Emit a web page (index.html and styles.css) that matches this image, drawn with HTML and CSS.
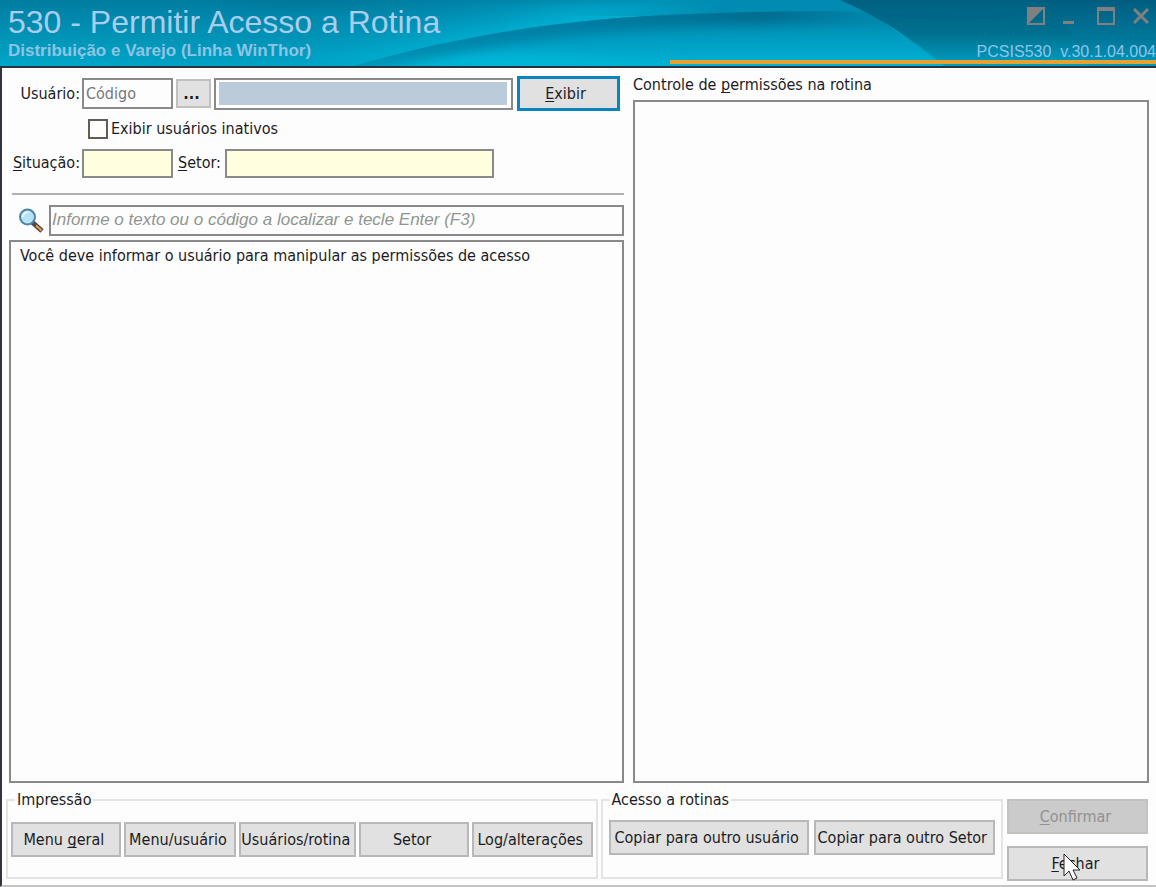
FILE: index.html
```html
<!DOCTYPE html>
<html lang="pt-BR">
<head>
<meta charset="utf-8">
<meta name="viewport" content="width=device-width, initial-scale=1">
<title>530 - Permitir Acesso a Rotina</title>
<link rel="stylesheet" href="styles.css">
</head>
<body>
<div class="window">
  <header class="titlebar">
    <svg class="waves" viewBox="0 0 1156 66" preserveAspectRatio="none" aria-hidden="true">
      <defs>
        <linearGradient id="base" x1="0" y1="0" x2="0" y2="1"><stop offset="0" stop-color="#007da1"/><stop offset="1" stop-color="#00a6c8"/></linearGradient>
        <linearGradient id="glow" gradientUnits="userSpaceOnUse" x1="480" y1="-6" x2="492" y2="48"><stop offset="0" stop-color="#008fb5" stop-opacity=".2"/><stop offset=".8" stop-color="#00aed0"/></linearGradient>
        <linearGradient id="crest" gradientUnits="userSpaceOnUse" x1="560" y1="0" x2="720" y2="0"><stop offset="0" stop-color="#008cb2" stop-opacity="0"/><stop offset="1" stop-color="#008cb2"/></linearGradient>
        <linearGradient id="wave" x1="0" y1="0" x2="0" y2="1"><stop offset="0" stop-color="#0083a8"/><stop offset=".5" stop-color="#009bc0"/><stop offset="1" stop-color="#00b2d3"/></linearGradient>
        <linearGradient id="shade" gradientUnits="userSpaceOnUse" x1="340" y1="0" x2="870" y2="0"><stop offset="0" stop-color="#0080a6" stop-opacity=".5"/><stop offset=".45" stop-color="#007da2"/><stop offset=".8" stop-color="#006c8f"/><stop offset="1" stop-color="#0086aa"/></linearGradient>
        <linearGradient id="deep" x1="0" y1="0" x2="0" y2="1"><stop offset="0" stop-color="#006082"/><stop offset=".5" stop-color="#00708f"/><stop offset="1" stop-color="#009fc2"/></linearGradient>
        <linearGradient id="edge" x1="0" y1="0" x2="0" y2="1"><stop offset="0" stop-color="#005d80"/><stop offset=".6" stop-color="#00789b"/><stop offset="1" stop-color="#0098bc"/></linearGradient>
        <filter id="soft" x="-10%" y="-100%" width="120%" height="300%"><feGaussianBlur stdDeviation="6"/></filter>
        <clipPath id="under"><path d="M340 70C450 36 570 18 690 14Q780 10 870 12L950 70Z"/></clipPath>
      </defs>
      <rect width="1156" height="66" fill="url(#base)"/>
      <path d="M100 66C200 30 300 8 440 0H900V66Z" fill="url(#glow)" filter="url(#soft)"/>
      <path d="M200 -4H400Q320 8 270 4Z" fill="#006f92" opacity=".6" filter="url(#soft)"/>
      <rect x="560" y="0" width="340" height="16" fill="url(#crest)"/>
      <g clip-path="url(#under)">
        <rect x="330" y="10" width="630" height="56" fill="url(#wave)"/>
        <path d="M330 76C450 40 570 60 690 66H400Z" fill="#00b8d8" filter="url(#soft)"/>
        <path d="M340 70C450 36 570 18 690 14Q780 10 960 12" fill="none" stroke="url(#shade)" stroke-width="24" filter="url(#soft)"/>
      </g>
      <path d="M840 0Q892 22 945 66H1156V0Z" fill="url(#deep)"/>
      <path d="M870 13Q960 17 1020 15Q960 22 880 16Z" fill="#005f80" opacity=".35"/>
      <path d="M1038 0Q1064 18 1080 45L1088 66H1156V0Z" fill="url(#edge)"/>
    </svg>
    <div class="heading">
      <h1>530 - Permitir Acesso a Rotina</h1>
      <p class="product">Distribuição e Varejo (Linha WinThor)</p>
    </div>
    <div class="side">
      <div class="controls">
        <button type="button" aria-label="Tema"><svg viewBox="0 0 18 18"><path d="M1 1H17V17H1Z" fill="none" stroke="#808080" stroke-width="2"/><path d="M1 1H17L1 17Z" fill="#808080"/></svg></button>
        <button type="button" aria-label="Minimizar"><svg viewBox="0 0 18 18"><path d="M1 15.500H12" stroke="#808080" stroke-width="3"/></svg></button>
        <button type="button" aria-label="Maximizar"><svg viewBox="0 0 18 18"><path d="M1 1H17V17H1ZM0 3H18" fill="none" stroke="#808080" stroke-width="2"/></svg></button>
        <button type="button" aria-label="Fechar janela"><svg viewBox="0 0 18 18"><path d="M2 2L16 16M16 2L2 16" fill="none" stroke="#808080" stroke-width="3"/></svg></button>
      </div>
      <p class="version">PCSIS530&nbsp; v.30.1.04.004</p>
    </div>
  </header>

  <main class="content">
    <div class="left">
      <form class="filters">
        <div class="row user-row">
          <label class="caption" for="codigo">Usuário:</label>
          <input class="code" id="codigo" type="text" placeholder="Código">
          <button class="lookup" type="button" aria-label="Pesquisar usuário">...</button>
          <div class="name-frame"><input type="text" aria-label="Nome do usuário" readonly></div>
          <button class="show" type="button"><u>E</u>xibir</button>
        </div>
        <div class="row check-row">
          <input id="inativos" type="checkbox"><label for="inativos">Exibir usuários inativos</label>
        </div>
        <div class="row sector-row">
          <label class="caption" for="situacao"><u>S</u>ituação:</label>
          <input class="yellow status" id="situacao" type="text" readonly>
          <label for="setor"><u>S</u>etor:</label>
          <input class="yellow sector" id="setor" type="text" readonly>
        </div>
      </form>
      <hr>
      <div class="search">
        <svg class="lens" viewBox="0 0 26 26" aria-hidden="true">
          <path d="M14 14L24 23" stroke="#4d4b4b" stroke-width="5"/>
          <path d="M18 17.500L23.500 22.500" stroke="#e4a047" stroke-width="2"/>
          <circle cx="9.500" cy="9" r="7.500" fill="#b8e2f5" stroke="#4d84aa" stroke-width="2"/>
          <path d="M5 9A5 5 0 0 1 10.500 4" fill="none" stroke="#e8f8ff" stroke-width="2"/>
        </svg>
        <input type="text" aria-label="Localizar" placeholder="Informe o texto ou o código a localizar e tecle Enter (F3)">
      </div>
      <section class="panel">Você deve informar o usuário para manipular as permissões de acesso</section>
    </div>
    <section class="right">
      <h2>Controle de <u>p</u>ermissões na rotina</h2>
      <div class="panel"></div>
    </section>
  </main>

  <footer class="actions">
    <fieldset class="print">
      <legend>Impressão</legend>
      <div class="buttons">
        <button type="button">Menu <u>g</u>eral</button>
        <button type="button">Menu/usuário</button>
        <button type="button">Usuários/rotina</button>
        <button type="button">Setor</button>
        <button type="button">Log/alterações</button>
      </div>
    </fieldset>
    <fieldset class="access">
      <legend>Acesso a rotinas</legend>
      <div class="buttons">
        <button type="button">Copiar para outro usuário</button>
        <button type="button">Copiar para outro Setor</button>
      </div>
    </fieldset>
    <div class="confirm">
      <button type="button" disabled><u>C</u>onfirmar</button>
      <button type="button"><u>F</u>echar
        <svg class="pointer" viewBox="0 0 18 28" aria-hidden="true"><path d="M1 1V23L6 18L10 27L14 25L10 17H17Z" fill="#fff" stroke="#222" stroke-width="1"/></svg>
      </button>
    </div>
  </footer>
</div>
</body>
</html>
```
FILE: styles.css
```css
* { box-sizing: border-box; }

body {
  margin: 0;
  background: #fdfdfd;
  color: #1c1c24;
  font: 16px/20px "DejaVu Sans Condensed", "DejaVu Sans", sans-serif;
}

h1, h2, p { margin: 0; font-weight: normal; }
button, input { font: inherit; color: inherit; border-radius: 0; margin: 0; }
u { text-underline-offset: 2px; text-decoration-skip-ink: none; }

.window {
  display: flex;
  flex-direction: column;
  min-height: 100vh;
  border-left: 2px solid #30343c;
  border-bottom: 2px solid #c4c4c4;
}

/* Title bar */
.titlebar {
  position: relative;
  display: flex;
  justify-content: space-between;
  height: 68px;
  margin-left: -2px;
  border-bottom: 2px solid #26343c;
  font-family: "Liberation Sans", Arial, sans-serif;
}
.waves { position: absolute; inset: 0; width: 100%; height: 100%; }
.titlebar::after {
  content: "";
  position: absolute;
  right: 0;
  bottom: 2px;
  width: 42%;
  height: 4px;
  background: #e8a030;
}
.heading { position: relative; padding: 5px 0 0 8px; color: #a9cdec; }
.heading h1 { font-size: 32px; line-height: 34px; }
.product { font-size: 17px; line-height: 24px; font-weight: bold; color: #8fc4e4; }
.side { position: relative; display: flex; flex-direction: column; align-items: flex-end; gap: 15px; padding-top: 7px; }
.controls { display: flex; gap: 17px; padding-right: 6px; }
.controls button { width: 18px; height: 18px; padding: 0; border: 0; background: none; }
.controls svg { display: block; width: 18px; height: 18px; }
.version { font-size: 16px; line-height: 24px; color: #8fc4e8; }

/* Main area */
.content {
  flex: 1;
  display: grid;
  grid-template-columns: 615fr 516fr;
  gap: 9px;
  padding: 8px 7px 0;
}
.left, .right { display: flex; flex-direction: column; min-width: 0; }
.right h2 { font-size: 16px; line-height: 18px; margin-bottom: 6px; }
.panel { flex: 1; border: 2px solid #8a8a8a; background: #fdfdfd; padding: 4px 9px; }
.row { display: flex; align-items: center; }
.caption { width: 73px; padding-right: 2px; display: flex; justify-content: flex-end; white-space: nowrap; }
.code, .search input, .yellow, .name-frame { border: 2px solid #8a8a8a; background: #fdfdfd; }
.code { width: 91px; height: 31px; padding: 0 2px; }
.code::placeholder { color: #747880; opacity: 1; }
.lookup { width: 35px; height: 29px; margin: 0 3px; padding: 0 4px 0 0; border: 2px solid #c0c0c0; background: #e1e1e1; font-weight: bold; }
.name-frame { flex: 1; height: 32px; padding: 2px 4px 3px 3px; }
.name-frame input { display: block; width: 100%; height: 100%; border: 0; background: #bccbd9; }
.show { width: 103px; height: 35px; margin: 0 4px; padding: 0 6px 0 0; border: 3px solid #0a84bf; background: #e1e1e1; }
.check-row { gap: 3px; height: 35px; padding-left: 79px; }
.check-row input { appearance: none; width: 20px; height: 20px; border: 2px solid #625c55; background: #fdfdfd; }
.sector-row { height: 34px; }
.yellow { height: 29px; background: #ffffe0; }
.status { width: 91px; margin-right: 5px; }
.sector { width: 269px; margin-left: 4px; }
hr { width: calc(100% - 3px); height: 2px; margin: 13px 0 10px 3px; border: 0; background: #b0b0b0; }
.search { display: flex; align-items: center; padding-left: 9px; margin-bottom: 4px; }
.lens { width: 26px; height: 26px; margin-right: 5px; }
.search input { flex: 1; min-width: 0; height: 31px; padding: 0 1px 2px; font: italic 17px "Liberation Sans", Arial, sans-serif; }
.search input::placeholder { color: #90968f; opacity: 1; }

/* Bottom actions */
.actions { display: grid; grid-template-columns: 591fr 402fr 142fr; gap: 3px; padding: 7px 8px 4px 4px; }
fieldset { min-width: 0; margin: 0; padding: 12px 3px 0; border: 2px solid #e4e4e4; height: 89px; }
legend { margin-left: 4px; padding: 0 2px; line-height: 20px; }
.access { padding: 10px 6px 0 6px; }
.access legend { margin-left: 1px; }
.buttons { display: grid; gap: 3px; }
.print .buttons { grid-template-columns: 110fr 113fr 117fr 110fr 121fr; }
.access .buttons { grid-template-columns: 200fr 181fr; gap: 5px; }
.buttons button, .confirm button { height: 35px; padding: 0 4px 0 0; border: 2px solid #b8b8b8; background: #e1e1e1; white-space: nowrap; }
.confirm { display: flex; flex-direction: column; gap: 12px; padding: 9px 0 0 1px; }
.confirm button { position: relative; }
.confirm button:disabled { border-color: #c4c2bf; background: #cbcbcb; color: #919191; }
.pointer { position: absolute; left: 54px; top: 5px; width: 18px; height: 28px; }
```
